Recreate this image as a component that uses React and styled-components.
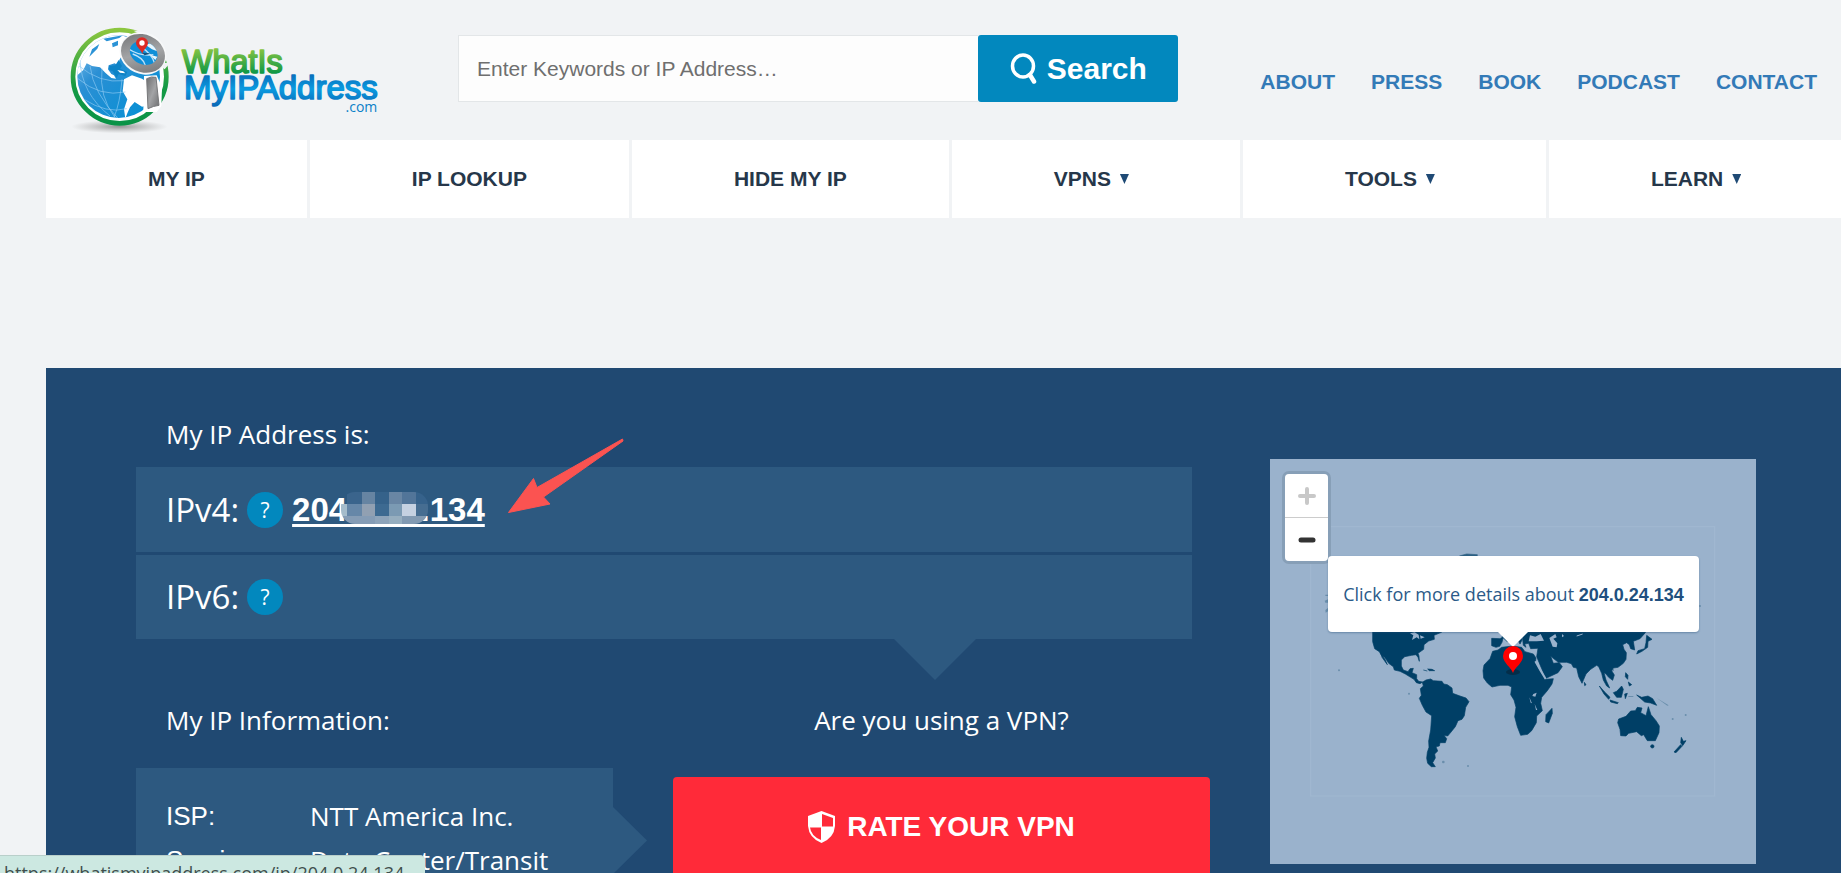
import React from "react";
import styled, { createGlobalStyle } from "styled-components";

const sans = `"Liberation Sans", Arial, sans-serif`;
const open = `"Open Sans", "Noto Sans", sans-serif`;

const GlobalStyle = createGlobalStyle`
  * { box-sizing: border-box; }
  html { scrollbar-width: none; }
  body { margin: 0; background: #f1f3f5; font-family: ${open}; overflow-x: hidden; }
`;

const Page = styled.div`
  min-height: 100vh;
`;

const Header = styled.header`
  display: flex;
  align-items: flex-start;
  padding: 0 24px 0 40px;
`;

const LogoLink = styled.a`
  display: block;
  flex: none;
  width: 380px;
  margin: 10px 38px 0 0;
  svg { display: block; }
`;

const SearchForm = styled.form`
  display: flex;
  flex: 1;
  min-width: 400px;
  height: 67px;
  margin-top: 35px;
`;

const SearchInput = styled.input`
  flex: 1;
  min-width: 0;
  padding: 0 18px;
  border: 1px solid #e3e6e8;
  border-right: 0;
  background: #fdfdfd;
  color: #444;
  font: 21px ${sans};
  &::placeholder { color: #6f6f6f; opacity: 1; }
`;

const SearchButton = styled.button`
  display: flex;
  align-items: center;
  justify-content: center;
  gap: 9px;
  width: 200px;
  border: 0;
  border-radius: 3px;
  background: #0288be;
  color: #fff;
  font: bold 30px ${sans};
`;

const TopLinks = styled.nav`
  display: flex;
  gap: 36px;
  margin: 70px 0 0 82px;
`;

const TopLink = styled.a`
  color: #337ab7;
  font: bold 21px/24px ${sans};
  text-decoration: none;
`;

const MainNav = styled.nav`
  display: flex;
  gap: 3px;
  margin-left: 46px;
  overflow: hidden;
`;

const NavItem = styled.a`
  display: flex;
  flex: 1 0 auto;
  align-items: center;
  justify-content: center;
  height: 78px;
  padding: 0 102px;
  background: #fff;
  color: #26374a;
  font: bold 21px/24px ${sans};
  text-decoration: none;
`;

const Caret = styled.span`
  width: 9px;
  height: 10px;
  margin: 0 9px;
  background: #1f4a75;
  clip-path: polygon(0 0, 100% 0, 50% 100%);
`;

const Hero = styled.main`
  display: grid;
  grid-template-columns: minmax(0, 1fr) 486px;
  column-gap: 78px;
  align-items: start;
  min-height: 640px;
  margin: 150px 0 0 46px;
  padding: 0 85px 0 90px;
  background: #204972;
  color: #fff;
`;

const Details = styled.section`
  padding-top: 48px;
`;

const Title = styled.h2`
  margin: 0;
  padding: 0 30px;
  font: 26px/36px ${open};
  text-align: ${(p) => p.$align || "left"};
`;

const Addresses = styled.div`
  position: relative;
  display: grid;
  gap: 3px;
  margin-top: 15px;
  &::after {
    content: "";
    position: absolute;
    top: 100%;
    right: 216px;
    width: 82px;
    height: 41px;
    background: #2d5980;
    clip-path: polygon(0 0, 100% 0, 50% 100%);
  }
`;

const AddressRow = styled.div`
  position: relative;
  display: flex;
  align-items: center;
  height: 85px;
  padding: 0 30px;
  background: #2d5980;
  font: 33px/44px ${open};
  & + & { height: 84px; }
`;

const Help = styled.button`
  width: 36px;
  height: 36px;
  margin: 0 9px 0 8px;
  padding: 0;
  border: 0;
  border-radius: 50%;
  background: #0288be;
  color: #fff;
  font: 21px/36px ${open};
`;

const IpLink = styled.a`
  position: relative;
  color: #fff;
  font: bold 33px/38px ${sans};
  text-decoration: underline;
  text-decoration-thickness: 3px;
  text-underline-offset: 3px;
  text-decoration-skip-ink: none;
`;

const Mosaic = styled.svg`
  position: absolute;
  top: 1px;
  left: 49px;
`;

const Arrow = styled.svg`
  position: absolute;
  top: -29px;
  left: 371px;
`;

const Lower = styled.div`
  display: grid;
  grid-template-columns: 477fr 537fr;
  column-gap: 60px;
  margin: 63px -18px 0 0;
`;

const InfoCard = styled.div`
  position: relative;
  height: 240px;
  margin-top: 30px;
  padding: 26px 30px;
  background: #2d5980;
  &::after {
    content: "";
    position: absolute;
    top: 39px;
    left: 100%;
    width: 34px;
    height: 67px;
    background: #2d5980;
    clip-path: polygon(0 0, 100% 50%, 0 100%);
  }
`;

const InfoList = styled.dl`
  display: grid;
  grid-template-columns: 144px 1fr;
  margin: 0;
  line-height: 44px;
  font-size: 26px;
  dt { font-family: ${sans}; }
  dd { margin: 0; font-family: ${open}; white-space: nowrap; }
`;

const RateButton = styled.button`
  display: flex;
  align-items: center;
  justify-content: center;
  gap: 12px;
  width: 100%;
  height: 100px;
  margin-top: 39px;
  border: 0;
  border-radius: 4px;
  background: #ff2a39;
  color: #fff;
  font: bold 28px/36px ${sans};
`;

const MapPanel = styled.section`
  position: relative;
  height: 405px;
  margin-top: 91px;
  background: #9ab2cc;
  > svg { display: block; }
`;

const ZoomControl = styled.div`
  position: absolute;
  top: 12px;
  left: 12px;
  width: 49px;
  border: 3px solid #879fb7;
  border-radius: 7px;
  overflow: hidden;
`;

const ZoomButton = styled.button`
  display: flex;
  align-items: center;
  justify-content: center;
  width: 43px;
  height: 43px;
  padding: 0;
  border: 0;
  background: #fff;
  color: ${(p) => (p.$muted ? "#c8c8c8" : "#333")};
  & + & { height: 44px; border-top: 1px solid #ccc; }
`;

const Popup = styled.a`
  position: absolute;
  top: 97px;
  left: 58px;
  width: 371px;
  height: 76px;
  border-radius: 4px;
  background: #fff;
  box-shadow: 0 1px 2px rgba(31, 73, 113, 0.4);
  color: #2b5a88;
  font: 18px/76px ${open};
  text-align: center;
  text-decoration: none;
  white-space: nowrap;
  strong { color: #204f7e; font: bold 18px ${sans}; }
  &::after {
    content: "";
    position: absolute;
    top: 100%;
    left: 170px;
    width: 30px;
    height: 15px;
    background: #fff;
    clip-path: polygon(0 0, 100% 0, 50% 100%);
  }
`;

const Pin = styled.svg`
  position: absolute;
  top: 187px;
  left: 231px;
`;

const StatusBar = styled.div`
  position: fixed;
  bottom: 0;
  left: 0;
  width: 425px;
  height: 18px;
  padding: 5px 4px 0;
  border-top: 1px solid #b9cfca;
  border-top-right-radius: 5px;
  background: #cce8e1;
  color: #3f4f4d;
  font: 18px/24px ${open};
  white-space: nowrap;
  overflow: hidden;
`;

function Logo() {
  return (
    <svg width="380" height="130" viewBox="0 0 1140 390" role="img" aria-label="WhatIsMyIPAddress.com">
      <defs>
        <linearGradient id="ring" x1="0" y1="0" x2="0" y2="1">
          <stop offset="0" stopColor="#8cc63f" />
          <stop offset=".6" stopColor="#159a45" />
          <stop offset="1" stopColor="#0a9347" />
        </linearGradient>
        <linearGradient id="sea" x1="0" y1="0" x2="1" y2="1">
          <stop offset="0" stopColor="#8cc7ee" />
          <stop offset=".35" stopColor="#2a8fd4" />
          <stop offset="1" stopColor="#0090d4" />
        </linearGradient>
        <linearGradient id="metal" x1="0" y1="0" x2="1" y2="1">
          <stop offset="0" stopColor="#6d6e70" />
          <stop offset=".5" stopColor="#a3a4a6" />
          <stop offset="1" stopColor="#6d6e70" />
        </linearGradient>
        <linearGradient id="green" gradientUnits="userSpaceOnUse" x1="0" y1="118" x2="0" y2="192">
          <stop offset="0" stopColor="#84c341" />
          <stop offset="1" stopColor="#0a9647" />
        </linearGradient>
        <linearGradient id="blue" gradientUnits="userSpaceOnUse" x1="0" y1="198" x2="0" y2="285">
          <stop offset="0" stopColor="#0a72be" />
          <stop offset=".45" stopColor="#0a9be0" />
          <stop offset="1" stopColor="#0a6ab8" />
        </linearGradient>
        <radialGradient id="shade">
          <stop offset="0" stopColor="#777" stopOpacity=".75" />
          <stop offset="1" stopColor="#999" stopOpacity="0" />
        </radialGradient>
        <clipPath id="globeClip"><circle cx="236" cy="200" r="124" /></clipPath>
        <clipPath id="lensClip"><ellipse cx="311" cy="129" rx="43" ry="34" transform="rotate(25 311 129)" /></clipPath>
      </defs>
      <ellipse cx="238" cy="350" rx="145" ry="20" fill="url(#shade)" />
      <circle cx="239" cy="200" r="140" fill="#fff" stroke="url(#ring)" strokeWidth="14" />
      <circle cx="236" cy="200" r="124" fill="url(#sea)" />
      <g clipPath="url(#globeClip)">
        <path d="M112 150 L140 110 L190 78 L238 74 L290 90 L250 130 L238 150 L236 168 L224 160 L206 166 L204 178 L214 192 L222 196 L228 206 L214 204 L196 188 L180 172 L156 168 L140 160 L130 180 L112 196Z" fill="#fff" />
        <path d="M156 118 L178 102 L172 116 L148 140Z M190 86 L248 76 L238 84 L200 94Z M216 100 L234 92 L234 106 L218 112Z" fill="#2b93d6" />
        <path d="M236 150 L246 168 L240 176 L262 186 L256 198 L236 192 L230 204 L218 184 L208 180 L208 168 L226 166Z" fill="#0d83c6" />
        <path d="M252 208 L276 196 L306 206 L330 222 L360 240 L350 280 L306 290 L284 276 L270 292 L262 310 L256 326 L252 298 L262 268 L248 244Z" fill="#fff" />
        <path d="M232 180 L250 184 L256 190 L240 188Z" fill="#fff" />
        <path d="M120 150 Q124 250 210 318 M150 168 Q160 250 235 326 M186 176 Q176 260 226 324 M246 208 Q240 280 222 322 M114 206 Q180 262 256 246 M132 268 Q200 312 260 296 M112 164 Q180 222 252 212" fill="none" stroke="#8cc9f2" strokeWidth="2" />
      </g>
      <path d="M312 198 L350 196 L366 232 L364 288 L350 306 L310 306Z" fill="#fff" />
      <path d="M350 160 L392 158 L384 166 L374 178Z M280 62 L312 62 L300 72Z" fill="#f1f3f5" />
      <ellipse cx="309" cy="130" rx="72" ry="62" transform="rotate(25 309 130)" fill="#f7f8f9" />
      <ellipse cx="309" cy="130" rx="68" ry="56" transform="rotate(25 309 130)" fill="url(#metal)" />
      <ellipse cx="311" cy="129" rx="43" ry="34" transform="rotate(25 311 129)" fill="#0f8fd8" />
      <g clipPath="url(#lensClip)">
        <path d="M278 132 Q312 144 316 168 M264 116 Q300 140 340 134 M302 110 Q336 132 344 160" fill="none" stroke="#bfe2f8" strokeWidth="4" />
        <path d="M316 104 L342 96 L352 124 L336 118Z M330 134 L352 140 L346 150Z" fill="#e8f5fc" />
        <path d="M306 128 L332 130 L314 136Z" fill="#17527a" />
      </g>
      <path d="M307 132 C303 116 288 112 288 98 A18 16 0 0 1 324 98 C324 112 310 116 307 132Z" fill="#dd2a24" />
      <circle cx="306" cy="99" r="8" fill="#fff" />
      <path d="M320 206 Q334 198 348 202 L357 286 Q340 288 324 296Z" fill="url(#metal)" stroke="#77787a" strokeWidth="3" />
      <g fontFamily={sans} strokeWidth="5" strokeLinejoin="round">
        <text x="426" y="189" fontSize="97" fill="url(#green)" stroke="url(#green)">WhatIs</text>
        <text x="432" y="268" fontSize="99" fill="url(#blue)" stroke="url(#blue)">MyIPAddress</text>
      </g>
      <text x="1012" y="305" textAnchor="end" fontFamily={open} fontSize="42" fill="#0a80c8">.com</text>
    </svg>
  );
}

const SearchIcon = () => (
  <svg width="28" height="31" viewBox="0 0 28 31" fill="none" stroke="#fff" aria-hidden="true">
    <ellipse cx="13" cy="13" rx="10.500" ry="11" strokeWidth="3.500" />
    <path d="M20 22 L24 28.500" strokeWidth="4.500" strokeLinecap="round" />
  </svg>
);

const ShieldIcon = () => (
  <svg width="27" height="32" viewBox="0 0 27 32" aria-hidden="true">
    <path d="M13.500 0 L27 5 V15 Q26 27 13.500 32 Q1 27 0 15 V5Z" fill="#fff" />
    <path d="M14 3 L25 7 V15.500 H14Z M13 16.500 V29 Q3 25 2 16.500Z" fill="#ff2a39" />
  </svg>
);

const mosaicCells = [
  [0, 12, 6, 12, "#a5bccb"], [6, 0, 15, 12, "#3a648c"], [6, 12, 15, 12, "#6687a8"],
  [21, 0, 13, 12, "#6684a2"], [21, 12, 13, 12, "#91a0b2"], [34, 0, 14, 12, "#35628a"],
  [34, 12, 14, 12, "#3d6a91"], [48, 0, 13, 12, "#6986a4"], [48, 12, 13, 12, "#7b9ab3"],
  [61, 0, 14, 12, "#527599"], [61, 12, 14, 12, "#c5d1e1"], [75, 0, 12, 12, "#36628b"],
  [75, 12, 12, 12, "#466d91"], [0, 24, 34, 8, "#859cb5"], [34, 24, 14, 8, "#8ea4ba"],
  [48, 24, 13, 8, "#96aebf"], [61, 24, 26, 8, "#829ab2"],
];

function WorldMap() {
  return (
    <svg width="486" height="405" viewBox="30 27 1458 1215" aria-label="World map" role="img">
      <rect x="152" y="230" width="1212" height="808" fill="none" stroke="#a0b7d0" strokeWidth="4" />
      <g fill="#003f66" stroke="#003f66" strokeWidth="2" strokeLinejoin="round">
        <path d="M598 318 L620 312 L652 314 L650 330 L600 330Z" opacity=".7" />
        <path d="M338 535 L338 575 L344 596 L358 605 L364 616 L374 622 L386 640 L400 650 L403 660 L420 664 L436 672 L452 682 L462 688 L469 698 L480 701 L488 696 L476 694 L470 686 L470 674 L456 668 L460 655 L450 656 L444 665 L430 660 L424 648 L424 630 L434 620 L455 616 L468 614 L474 622 L478 634 L477 618 L474 610 L491 598 L492 584 L506 573 L523 568 L522 556 L544 547 L560 535Z" />
        <path d="M362 608 L366 622 L382 644 L376 630Z M490 660 L502 663 M503 657 L516 658 L524 662 L508 662Z" />
        <path d="M487 697 L498 690 L512 687 L520 692 L546 694 L551 702 L562 704 L576 714 L578 730 L600 738 L618 744 L627 755 L617 772 L613 797 L606 808 L594 812 L586 830 L570 850 L563 858 L552 856 L560 866 L556 878 L540 878 L538 888 L528 890 L533 903 L524 912 L526 924 L518 938 L526 950 L514 950 L503 940 L500 925 L502 907 L507 892 L506 873 L512 840 L515 797 L498 786 L487 766 L478 745 L484 736 L481 716 L490 708Z" />
        <path d="M698 604 L714 600 L725 592 L758 588 L785 592 L795 605 L820 612 L828 624 L826 638 L840 662 L856 688 L880 686 L876 702 L862 722 L845 742 L842 760 L847 782 L830 798 L829 818 L815 842 L803 853 L782 856 L772 830 L764 800 L768 772 L762 750 L752 734 L755 711 L744 706 L720 706 L696 711 L682 699 L671 684 L669 662 L672 645 L690 626Z" />
        <path d="M876 775 L877 790 L866 819 L857 815 L858 794Z" />
        <path d="M695 565 L720 566 L730 560 L726 577 L719 589 L708 592 L695 587Z M726 560 L740 540 L800 540 L795 552 L783 555 L786 570 L780 582 L768 560 L752 560 L742 575Z" />
        <path d="M786 550 L806 540 L1158 540 L1156 548 L1140 566 L1120 574 L1124 600 L1112 596 L1108 584 L1100 578 L1088 584 L1092 598 L1099 608 L1098 628 L1090 640 L1074 652 L1060 654 L1055 662 L1063 675 L1058 691 L1046 682 L1038 672 L1032 668 L1038 690 L1049 714 L1040 708 L1030 690 L1025 670 L1016 650 L1010 646 L992 658 L978 672 L966 700 L956 680 L950 654 L940 652 L934 641 L920 637 L895 637 L872 619 L880 640 L898 638 L907 650 L894 668 L858 685 L845 656 L830 620 L834 595 L812 596 L806 580 L794 582 L798 592 L790 586Z" />
        <path d="M973 697 L978 704 L974 707Z M1018 708 L1034 726 L1050 742 L1046 748 L1032 732Z M1050 750 L1075 758 L1072 761 L1052 756Z M1060 728 L1070 724 L1085 708 L1090 718 L1084 742 L1070 742Z M1094 732 L1102 730 L1096 746Z M1130 735 L1145 742 L1164 738 L1178 746 L1190 766 L1172 759 L1154 756Z M1097 668 L1104 676 L1103 688 L1096 680Z M1105 696 L1115 704 L1108 708Z M1055 660 L1062 660" />
        <path d="M1160 556 L1176 568 L1164 574 L1163 592 L1146 604 L1130 612 L1134 602 L1154 596 L1158 578Z" />
        <path d="M1073 818 L1076 807 L1098 799 L1112 783 L1126 782 L1132 772 L1146 774 L1142 788 L1158 797 L1165 770 L1173 794 L1188 812 L1198 828 L1197 848 L1186 872 L1162 872 L1151 854 L1144 857 L1130 845 L1106 850 L1098 858 L1082 857 L1080 838Z" />
        <circle cx="1177" cy="889" r="5" />
        <path d="M1264 862 L1270 874 L1278 872 L1268 887 L1262 878Z M1262 884 L1266 889 L1248 908 L1242 906Z" />
      </g>
      <path d="M826 634 L842 662 L857 687" fill="none" stroke="#9ab2cc" strokeWidth="6" />
      <g fill="#9ab2cc">
        <path d="M450 550 L464 547 L476 554 L478 568 L470 562 L456 570 L460 556Z M480 556 L494 562 L482 566Z" />
        <path d="M806 574 L810 556 L826 560 L842 552 L852 572 L830 574Z" />
        <path d="M868 564 L886 552 L890 562 L880 566 L892 580 L890 592 L878 590Z M906 552 L912 558 L906 562Z" />
        <path d="M820 732 L830 728 L826 740 L817 738Z M808 742 L816 760 L812 758Z M824 762 L832 780 L828 780Z" />
      </g>
      <path d="M950 558 L968 552" stroke="#9ab2cc" strokeWidth="3" />
      <g fill="#56809f" opacity=".7">
        <circle cx="237" cy="661" r="3" /><circle cx="447" cy="731" r="3" /><circle cx="550" cy="936" r="4" />
        <circle cx="624" cy="948" r="3" /><circle cx="1238" cy="807" r="3" /><circle cx="1277" cy="795" r="3" />
        <circle cx="1320" cy="468" r="3" />
        <path d="M196 434 L204 434 V438 H196Z M194 452 L204 448 V458 H196Z M196 480 L204 474 V484 L197 488Z M1190 744 L1226 766 L1222 767Z M1104 738 L1120 738 V741 H1106Z" />
      </g>
    </svg>
  );
}

const topLinks = ["ABOUT", "PRESS", "BOOK", "PODCAST", "CONTACT"];
const navItems = [
  { label: "MY IP" },
  { label: "IP LOOKUP" },
  { label: "HIDE MY IP" },
  { label: "VPNS", menu: true },
  { label: "TOOLS", menu: true },
  { label: "LEARN", menu: true },
];

export default function App() {
  return (
    <Page>
      <GlobalStyle />
      <Header>
        <LogoLink href="#home"><Logo /></LogoLink>
        <SearchForm role="search" onSubmit={(e) => e.preventDefault()}>
          <SearchInput type="text" aria-label="Search" placeholder="Enter Keywords or IP Address…" />
          <SearchButton type="submit"><SearchIcon />Search</SearchButton>
        </SearchForm>
        <TopLinks>
          {topLinks.map((label) => <TopLink key={label} href="#top">{label}</TopLink>)}
        </TopLinks>
      </Header>
      <MainNav>
        {navItems.map(({ label, menu }) => (
          <NavItem key={label} href="#nav">{label}{menu && <Caret />}</NavItem>
        ))}
      </MainNav>
      <Hero>
        <Details>
          <Title>My IP Address is:</Title>
          <Addresses>
            <AddressRow>
              IPv4:
              <Help type="button" aria-label="About IPv4">?</Help>
              <IpLink href="#ip">
                204.0.24.134
                <Mosaic width="87" height="32" viewBox="0 0 87 32" aria-hidden="true">
                  <clipPath id="pill"><rect width="87" height="32" rx="14" /></clipPath>
                  <g clipPath="url(#pill)">
                    {mosaicCells.map(([x, y, w, h, fill]) => (
                      <rect key={`${x}-${y}`} x={x} y={y} width={w} height={h} fill={fill} shapeRendering="crispEdges" />
                    ))}
                  </g>
                </Mosaic>
              </IpLink>
              <Arrow width="118" height="78" viewBox="0 0 118 78" aria-hidden="true">
                <path d="M1.500 74.500 L26.500 40.500 L30 49.500 L115.500 1 L116 3 L36.500 59 L43 66Z" fill="#fb5351" stroke="#fb5351" strokeLinejoin="round" />
              </Arrow>
            </AddressRow>
            <AddressRow>
              IPv6:
              <Help type="button" aria-label="About IPv6">?</Help>
            </AddressRow>
          </Addresses>
          <Lower>
            <div>
              <Title>My IP Information:</Title>
              <InfoCard>
                <InfoList>
                  <dt>ISP:</dt><dd>NTT America Inc.</dd>
                  <dt>Services:</dt><dd>Data Center/Transit</dd>
                </InfoList>
              </InfoCard>
            </div>
            <div>
              <Title $align="center">Are you using a VPN?</Title>
              <RateButton type="button"><ShieldIcon />RATE YOUR VPN</RateButton>
            </div>
          </Lower>
        </Details>
        <MapPanel>
          <WorldMap />
          <ZoomControl>
            <ZoomButton type="button" $muted aria-label="Zoom in">
              <svg width="18" height="18" viewBox="0 0 18 18" stroke="currentColor" strokeWidth="4" strokeLinecap="round"><path d="M2 9H16M9 2V16" /></svg>
            </ZoomButton>
            <ZoomButton type="button" aria-label="Zoom out">
              <svg width="18" height="18" viewBox="0 0 18 18" stroke="currentColor" strokeWidth="5" strokeLinecap="round"><path d="M3 9H15" /></svg>
            </ZoomButton>
          </ZoomControl>
          <Popup href="#details">Click for more details about <strong>204.0.24.134</strong></Popup>
          <Pin width="24" height="30" viewBox="0 0 24 30" aria-hidden="true">
            <ellipse cx="12" cy="26" rx="7" ry="3" fill="#06263d" opacity=".7" />
            <path d="M12 27 C10 21 2 17 2 10 A10 10 0 0 1 22 10 C22 17 14 21 12 27Z" fill="#f00" />
            <circle cx="12" cy="10" r="4" fill="#fff" />
          </Pin>
        </MapPanel>
      </Hero>
      <StatusBar>https://whatismyipaddress.com/ip/204.0.24.134</StatusBar>
    </Page>
  );
}
